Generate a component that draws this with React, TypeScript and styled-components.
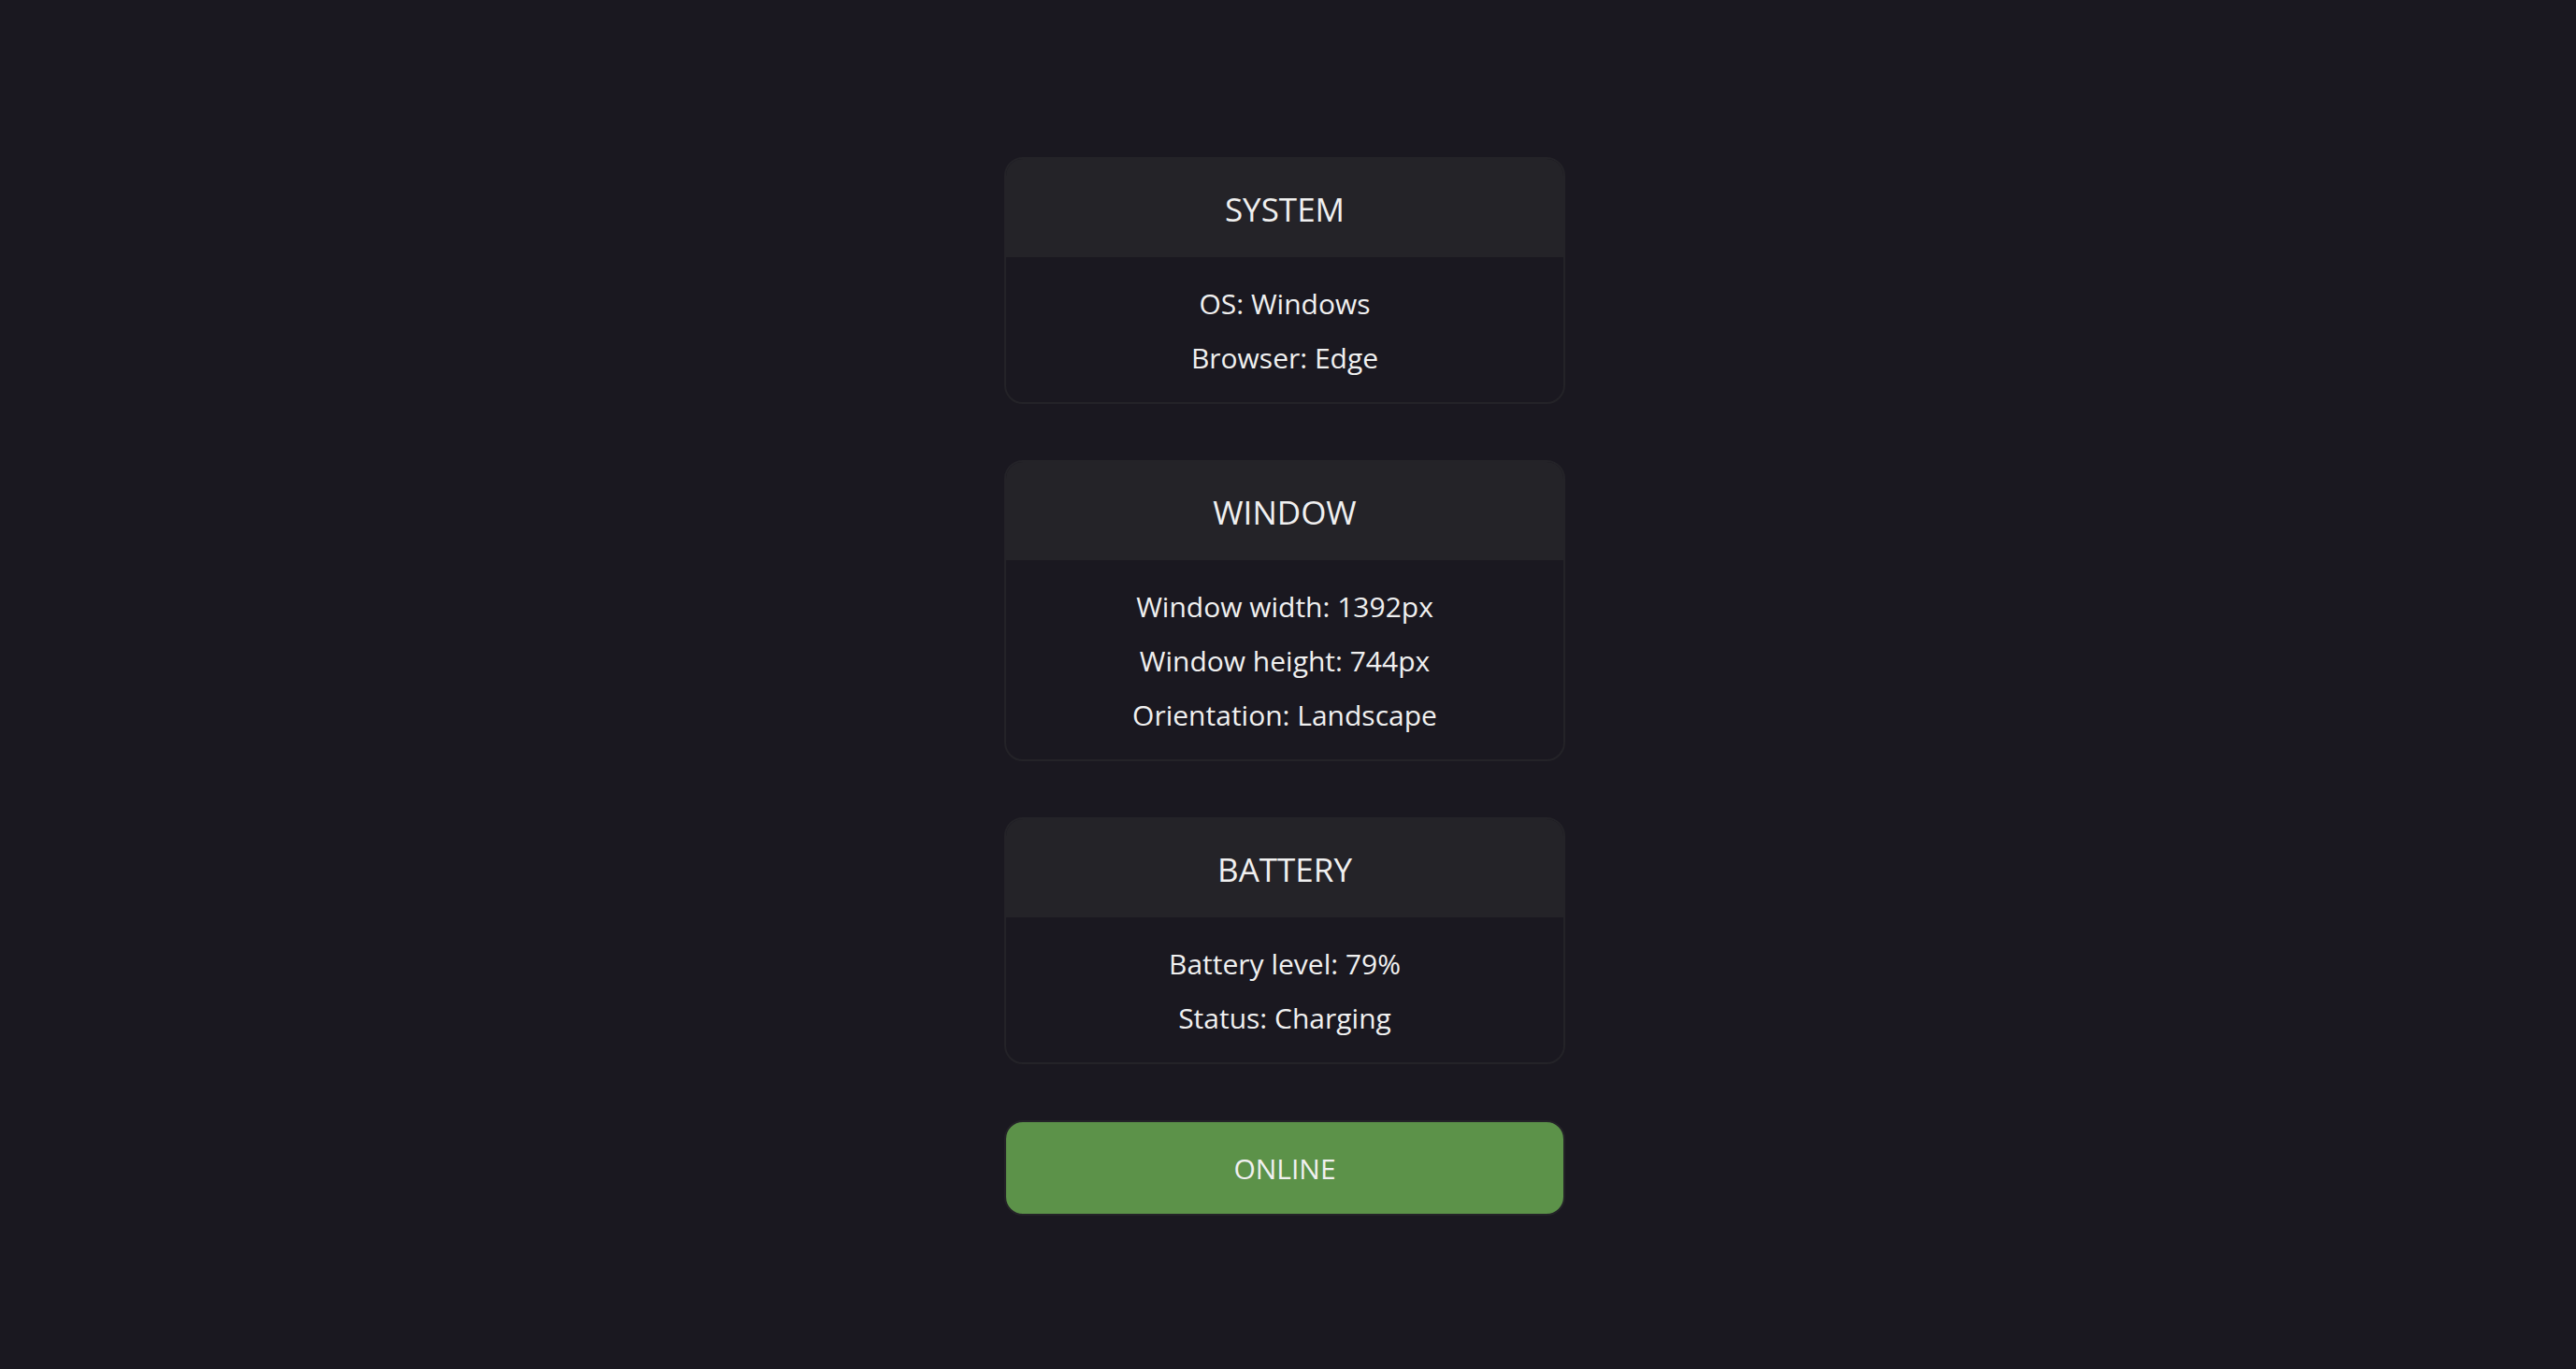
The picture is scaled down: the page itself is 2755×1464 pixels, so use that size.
import React from "react";
import styled, { createGlobalStyle } from "styled-components";

const GlobalStyle = createGlobalStyle`
  *, *::before, *::after { box-sizing: border-box; }
  body {
    margin: 0;
    background: #1a1820;
    color: #f0f0f0;
    font-family: "Segoe UI", "Open Sans", "Noto Sans", sans-serif;
    font-size: 30px;
  }
`;

const Page = styled.main`
  min-height: 100vh;
  display: flex;
  flex-direction: column;
  align-items: center;
  justify-content: center;
  gap: 60px;
  padding: 44px 47px 40px 40px;
`;

const Card = styled.section`
  width: 100%;
  max-width: 600px;
  border: 2px solid #242328;
  border-radius: 20px;
  overflow: hidden;
  text-align: center;
`;

const CardTitle = styled.h2`
  margin: 0;
  padding: 29px 20px 27px;
  background: #242328;
  font-size: 35px;
  font-weight: 400;
  line-height: 49px;
  text-transform: uppercase;
`;

const InfoList = styled.ul`
  list-style: none;
  margin: 0;
  padding: 21px 20px 18px;
`;

const InfoItem = styled.li`
  line-height: 58px;
`;

const StatusBanner = styled.div<{ $online: boolean }>`
  width: 100%;
  max-width: 600px;
  padding: 28px 20px 26px;
  border: 2px solid #242328;
  border-radius: 20px;
  background: ${(p) => (p.$online ? "#5c9249" : "#a33c3c")};
  line-height: 44px;
  text-align: center;
  text-transform: uppercase;
`;

const groups = [
  { title: "System", items: [["OS", "Windows"], ["Browser", "Edge"]] },
  {
    title: "Window",
    items: [["Window width", "1392px"], ["Window height", "744px"], ["Orientation", "Landscape"]],
  },
  { title: "Battery", items: [["Battery level", "79%"], ["Status", "Charging"]] },
];

export default function App() {
  const online = true;
  return (
    <>
      <GlobalStyle />
      <Page>
        {groups.map((group) => (
          <Card key={group.title}>
            <CardTitle>{group.title}</CardTitle>
            <InfoList>
              {group.items.map(([label, value]) => (
                <InfoItem key={label}>{`${label}: ${value}`}</InfoItem>
              ))}
            </InfoList>
          </Card>
        ))}
        <StatusBanner $online={online} role="status">
          {online ? "Online" : "Offline"}
        </StatusBanner>
      </Page>
    </>
  );
}
